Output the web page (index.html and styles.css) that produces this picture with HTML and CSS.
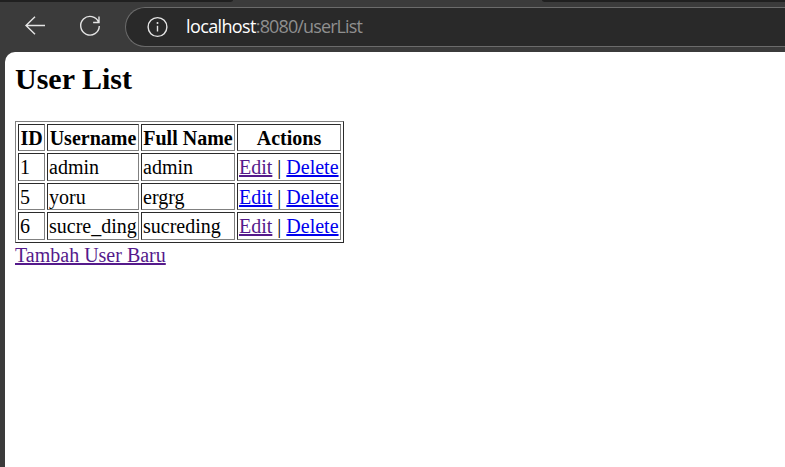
FILE: index.html
```html
<!DOCTYPE html>
<html lang="id">
<head>
<meta charset="utf-8">
<title>User List</title>
<link rel="stylesheet" href="styles.css">
</head>
<body>
<div class="tabs"><div class="tab-left"></div><div class="tab-right"></div></div>
<header class="toolbar">
  <svg class="icon back" viewBox="0 0 24 24"><path d="M22 11.5H3M12 2.8L3 11.5l9 8.7"/></svg>
  <svg class="icon reload" viewBox="0 0 24 24"><path d="M20.6 8.2A9.3 9.3 0 1 0 21.3 12M21 2.6v5.9h-5.9"/></svg>
  <div class="address">
    <svg class="icon info" viewBox="0 0 24 24"><circle cx="12.5" cy="12" r="9.4"/><path d="M12.5 10.8v5.7"/><circle class="dot" cx="12.5" cy="7.9" r="1"/></svg>
    <span class="url"><span class="host">localhost</span>:8080/userList</span>
  </div>
</header>
<main class="page">
  <h2>User List</h2>
  <table>
    <colgroup><col class="c-id"><col class="c-user"><col class="c-name"><col class="c-actions"></colgroup>
    <tr><th>ID</th><th>Username</th><th>Full Name</th><th>Actions</th></tr>
    <tr class="tall"><td>1</td><td>admin</td><td>admin</td><td><a class="seen" href="#">Edit</a> | <a href="#">Delete</a></td></tr>
    <tr><td>5</td><td>yoru</td><td>ergrg</td><td><a href="#">Edit</a> | <a href="#">Delete</a></td></tr>
    <tr class="tall"><td>6</td><td>sucre_ding</td><td>sucreding</td><td><a class="seen" href="#">Edit</a> | <a href="#">Delete</a></td></tr>
  </table>
  <a class="seen add" href="#">Tambah User Baru</a>
</main>
</body>
</html>
```
FILE: styles.css
```css
* { box-sizing: border-box; }
body {
  margin: 0;
  height: 467px;
  overflow: hidden;
  background: #3b3b3b;
  display: flex;
  flex-direction: column;
}
.tabs { height: 2px; display: flex; justify-content: space-between; }
.tab-left { width: 233px; background: #202020; border-bottom-right-radius: 4px 2px; }
.tab-right { width: 243px; background: #202020; border-bottom-left-radius: 4px 2px; }
.toolbar {
  height: 50px;
  flex: none;
  display: flex;
  align-items: flex-start;
  padding: 5px 0 0 23px;
}
.icon { width: 24px; height: 24px; fill: none; stroke: #e4e4e4; stroke-width: 1.4; flex: none; }
.back { margin-top: 7px; }
.reload { margin: 7px 0 0 31px; }
.address {
  margin-left: 23px;
  flex: 1;
  height: 40px;
  border: 1px solid #6b6b6b;
  border-right: 0;
  border-radius: 20px 0 0 20px;
  background: #292929;
  display: flex;
  align-items: center;
  padding-left: 19px;
}
.dot { fill: #e4e4e4; stroke: none; }
.url {
  margin: 0 0 2px 17px;
  font: 18px/24px "Open Sans", sans-serif;
  letter-spacing: -0.88px;
  color: #8f8f8f;
  white-space: nowrap;
}
.host { color: #fff; letter-spacing: -0.62px; }
.page {
  flex: 1;
  margin-left: 5px;
  padding: 10px 0 0 10px;
  background: #fff;
  border-top-left-radius: 10px;
  font: 20px/23px "Liberation Serif", serif;
  color: #000;
}
h2 { margin: 0 0 25px; font-size: 30px; line-height: 34px; }
table {
  width: 329px;
  table-layout: fixed;
  border: 1px solid;
  border-color: #808080 #2b2b2b #2b2b2b #808080;
  border-spacing: 2px;
}
.c-id { width: 27px; }
.c-user { width: 92px; }
.c-name { width: 94px; }
.c-actions { width: 104px; }
th, td {
  height: 27px;
  padding: 2px 1px 0;
  border: 1px solid;
  border-color: #2b2b2b #808080 #808080 #2b2b2b;
  white-space: nowrap;
}
.tall td { height: 28px; padding: 1px; }
a { color: #0000ee; text-decoration-thickness: 2px; }
.seen { color: #551a8b; }
.add { display: block; width: max-content; margin-top: 1px; }
```
